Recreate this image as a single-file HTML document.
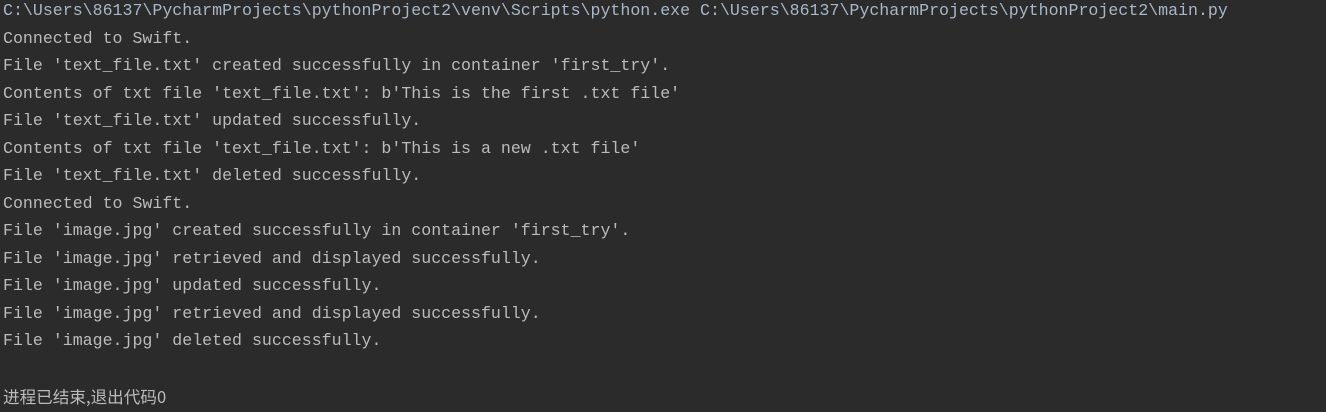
<!DOCTYPE html>
<html><head><meta charset="utf-8"><style>
html,body{margin:0;padding:0;background:#2b2b2b;width:1326px;height:410px;overflow:hidden}
pre{margin:0;position:absolute;left:3px;top:-3px;font-family:"Liberation Mono","Noto Sans CJK SC",monospace;font-size:16.6px;line-height:27.5px;color:#bbbbbb}
.c{color:#a9b7c6}
.z{font-family:"Noto Sans CJK SC","Liberation Mono",monospace;position:relative;top:1px}
</style></head><body><pre><span class="c">C:\Users\86137\PycharmProjects\pythonProject2\venv\Scripts\python.exe C:\Users\86137\PycharmProjects\pythonProject2\main.py</span>
Connected to Swift.
File 'text_file.txt' created successfully in container 'first_try'.
Contents of txt file 'text_file.txt': b'This is the first .txt file'
File 'text_file.txt' updated successfully.
Contents of txt file 'text_file.txt': b'This is a new .txt file'
File 'text_file.txt' deleted successfully.
Connected to Swift.
File 'image.jpg' created successfully in container 'first_try'.
File 'image.jpg' retrieved and displayed successfully.
File 'image.jpg' updated successfully.
File 'image.jpg' retrieved and displayed successfully.
File 'image.jpg' deleted successfully.

<span class="z">进程已结束,退出代码0</span></pre></body></html>
